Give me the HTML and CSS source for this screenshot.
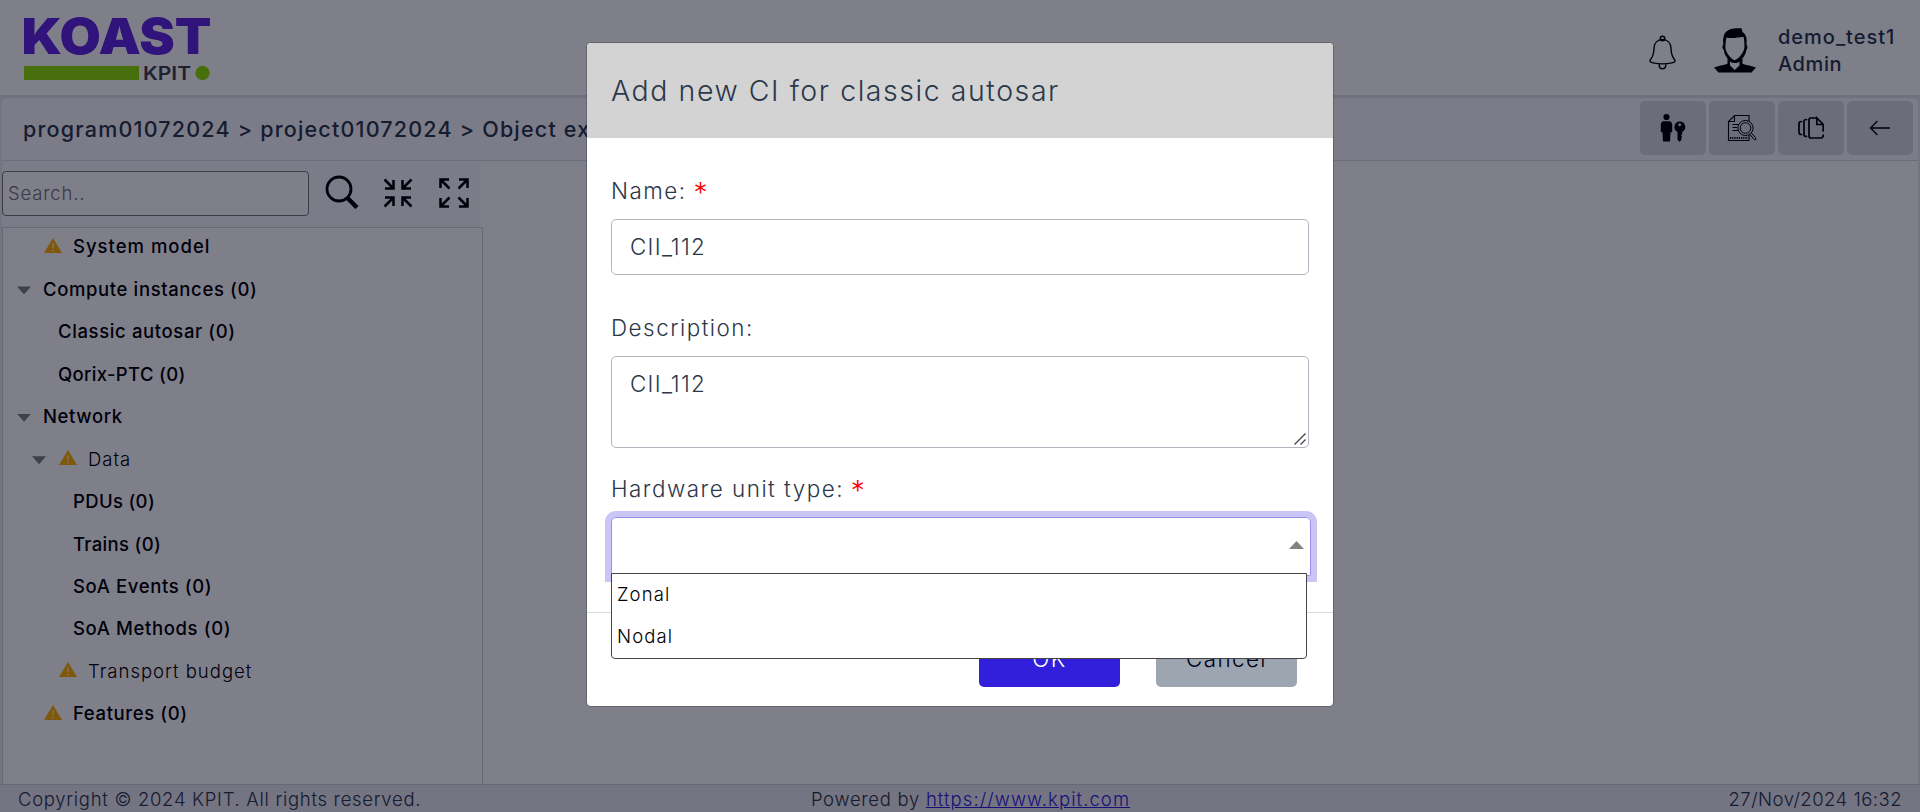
FILE: index.html
```html
<!DOCTYPE html>
<html lang="en">
<head>
<meta charset="utf-8">
<title>KOAST</title>
<link rel="stylesheet" href="styles.css">
</head>
<body>
<div class="app">
  <header class="header">
    <svg class="logo" width="190" height="72" viewBox="0 0 190 72">
      <text class="logo-name" x="-2.500" y="37" textLength="190" lengthAdjust="spacingAndGlyphs">KOAST</text>
      <rect x="0" y="49" width="115" height="14" fill="#8ede03"/>
      <text class="logo-sub" x="119" y="63" textLength="48" lengthAdjust="spacingAndGlyphs">KPIT</text>
      <circle cx="178.500" cy="56" r="7.200" fill="#8ede03"/>
    </svg>
    <div class="account">
      <svg class="bell" width="30" height="36" viewBox="0 0 30 36" fill="none" stroke="#000" stroke-width="1.400">
        <circle cx="14.500" cy="3.500" r="2.300"/>
        <path d="M14.500 4.500c-5 0-8.300 3.600-8.500 9-.2 6-1.200 8.300-3.500 11-1.600 2 .3 3 2.500 3.400 5.500 1.100 13.500 1.100 19 0 2.200-.4 4.100-1.400 2.500-3.400-2.300-2.700-3.300-5-3.500-11-.2-5.400-3.500-9-8.500-9zM11.300 29v1.800c0 4 6.400 4 6.400 0V29"/>
      </svg>
      <svg class="avatar" width="42" height="45" viewBox="0 0 42 45">
        <path d="M0 39.500c4-1.500 10-2.500 13.500-3.800V30.500C11 27.500 10.300 25 10 22.500 8 20 8 18.500 9.300 16.500 8.500 8 10.500 4 14.500 1.900 18 .3 23 .1 27.500.2L28.500 4c4 2.500 4.500 6.500 4 12.500 1.300 2 1.300 3.500-.3 6-.3 2.500-1.200 5-3.700 8v5.200C32 37 38 38 42 39.500L37.500 44.500h-33z" fill="#000"/>
        <path d="M12.500 9.500c5 1.300 12-.2 17-.8 1 3.800 1.200 9.300.7 12-.8 4-5.400 10-9.500 11.600-4.100-1.600-8.400-7.600-9.200-11.600-.5-3 .3-8 1-11.200zM16 33.500c3 2 6.500 2 9.500 0v4L20.700 42 16 37.500z" fill="#fff"/>
      </svg>
      <div class="user"><div class="user-name">demo_test1</div><div class="user-role">Admin</div></div>
    </div>
  </header>
  <div class="page">
    <nav class="crumbs">
      <div class="path">program01072024 &gt; project01072024 &gt; Object explorer</div>
      <div class="tools">
        <button class="tool"><svg width="26" height="30" viewBox="0 0 26 30"><circle cx="6.500" cy="4" r="3.100"/><path d="M4 8.200h5c2.200 0 3.200 1.600 3.200 3.500v7.500h-1.700l-.5 9.300H3l-.5-9.300H.8v-7.500C.8 9.800 1.800 8.200 4 8.200z"/><path fill-rule="evenodd" d="M19.700 8.500a5.500 5.500 0 0 1 2.500 10.400v2.300l-1.200 1.300 1.200 1.500-1.200 1.500.8 1-2.300 2.200-2-2V18.900A5.500 5.500 0 0 1 19.700 8.500zm0 1.800a1.500 1.500 0 1 0 .01 0z"/></svg></button>
        <button class="tool"><svg width="30" height="28" viewBox="0 0 30 28" fill="none" stroke="#000"><path d="M7.500 1.500H22v25H1.500V7.500zM7.500 1.500v6h-6" stroke-width="1.100"/><path d="M5.500 10.500h6M5.500 13.500h5M5.500 16.500h6" stroke-width="1.200"/><path d="M3 24h18" stroke-width="2" stroke-dasharray="1.200 1"/><path d="M23 20.500l4 5c1.500 1 2.800-.2 1.500-1.700L24.500 19" stroke-width="1"/><circle cx="18.500" cy="14" r="7.600" fill="#d8dbe0"/><circle cx="18.500" cy="14" r="5.300"/></svg></button>
        <button class="tool"><svg width="26" height="24" viewBox="0 0 26 24" fill="none" stroke="#000" stroke-width="1.700" stroke-linecap="round"><path d="M3.500 5.500c-2 0-2.500 1-2.500 2v9c0 1 .5 2 2.500 2M8.500 3.500c-2 0-2.500 1-2.500 2v13c0 1 .5 2 2.500 2M18.500 2H13c-1.500 0-2 1-2 2v16c0 1 .8 2 2 2h10c1.500 0 2.300-1 2.300-3M25.200 9v6"/><path d="M18.800 2v6.500h6.400z"/></svg></button>
        <button class="tool"><svg width="22" height="16" viewBox="0 0 22 16" fill="none" stroke="#000" stroke-width="1.300"><path d="M21 8H1.500M8.500 1L1.500 8l7 7"/></svg></button>
      </div>
    </nav>
    <main class="content">
      <aside class="side">
        <div class="search">
          <input class="search-input" placeholder="Search..">
          <svg width="34" height="34" viewBox="0 0 34 34" fill="none" stroke="#000"><circle cx="14" cy="14" r="12" stroke-width="2.800"/><path d="M22.500 23l9.500 9.500" stroke-width="4.500"/></svg>
          <svg class="collapse" width="30" height="30" viewBox="0 0 30 30" fill="none" stroke="#000" stroke-width="2.500"><path d="M1.500 1.500l8.500 8.500M10.500 2v8.500H2M28.500 1.500L20 10M19.500 2v8.500H28M1.500 28.500L10 20M10.500 28v-8.500H2M28.500 28.500L20 20M19.500 28v-8.500H28"/></svg>
          <svg class="expand" width="30" height="30" viewBox="0 0 30 30" fill="none" stroke="#000" stroke-width="2.500"><path d="M2 2l8.500 8.500M1.500 10V1.500H10M28 2l-8.500 8.500M20 1.500h8.500V10M2 28l8.500-8.500M1.500 20v8.500H10M28 28l-8.500-8.500M20 28.500h8.500V20"/></svg>
        </div>
        <div class="tree">
          <div class="node pad-warn1 wide"><svg class="warn" viewBox="0 0 18 15"><path d="M9 0l9 15H0z" fill="#ffb100"/><path d="M9 5v5M9 11.500v2" stroke="#fff" stroke-width="1.600" opacity=".6"/></svg><b>System model</b></div>
          <div class="node pad-arrow1"><i class="arrow"></i><b>Compute instances (0)</b></div>
          <div class="node pad-leaf2"><b>Classic autosar (0)</b></div>
          <div class="node pad-leaf2 tight"><b>Qorix-PTC (0)</b></div>
          <div class="node pad-arrow1"><i class="arrow"></i><b>Network</b></div>
          <div class="node pad-arrow2 light"><i class="arrow"></i><svg class="warn" viewBox="0 0 18 15"><path d="M9 0l9 15H0z" fill="#ffb100"/><path d="M9 5v5M9 11.500v2" stroke="#fff" stroke-width="1.600" opacity=".6"/></svg><span>Data</span></div>
          <div class="node pad-leaf3 tight"><b>PDUs (0)</b></div>
          <div class="node pad-leaf3 tight"><b>Trains (0)</b></div>
          <div class="node pad-leaf3"><b>SoA Events (0)</b></div>
          <div class="node pad-leaf3"><b>SoA Methods (0)</b></div>
          <div class="node pad-warn2 light"><svg class="warn" viewBox="0 0 18 15"><path d="M9 0l9 15H0z" fill="#ffb100"/><path d="M9 5v5M9 11.500v2" stroke="#fff" stroke-width="1.600" opacity=".6"/></svg><span>Transport budget</span></div>
          <div class="node pad-warn1"><svg class="warn" viewBox="0 0 18 15"><path d="M9 0l9 15H0z" fill="#ffb100"/><path d="M9 5v5M9 11.500v2" stroke="#fff" stroke-width="1.600" opacity=".6"/></svg><b>Features (0)</b></div>
        </div>
      </aside>
    </main>
  </div>
  <footer class="footer">
    <span>Copyright © 2024 KPIT. All rights reserved.</span>
    <span class="powered">Powered by <a href="#">https://www.kpit.com</a></span>
    <span class="clock">27/Nov/2024 16:32</span>
  </footer>
</div>
<div class="backdrop">
  <section class="modal">
    <h1 class="modal-head">Add new CI for classic autosar</h1>
    <div class="modal-body">
      <label class="label">Name: <em>*</em></label>
      <div class="field">CII_112</div>
      <label class="label label-desc">Description:</label>
      <div class="field area">CII_112<svg class="grip" width="12" height="12" viewBox="0 0 12 12" stroke="#444" stroke-width="1.300"><path d="M.5 11.500l11-11M6.500 11.500l5-5"/></svg></div>
      <label class="label label-type">Hardware unit type: <em>*</em></label>
      <div class="select"><i class="up"></i>
        <div class="options"><div class="option">Zonal</div><div class="option">Nodal</div></div>
      </div>
    </div>
    <div class="modal-foot">
      <button class="btn ok">OK</button>
      <button class="btn cancel">Cancel</button>
    </div>
  </section>
</div>
</body>
</html>
```
FILE: styles.css
```css
* { box-sizing: border-box; }
body {
  margin: 0;
  height: 812px;
  overflow: hidden;
  font-family: Inter, "Liberation Sans", sans-serif;
  font-size: 18.5px;
  font-weight: 300;
  color: #2c384a;
  background: #fff;
}
button { font: inherit; border: 0; padding: 0; }
svg { flex: none; display: block; }

.app { height: 812px; display: flex; flex-direction: column; }
.header {
  flex: none;
  height: 98px;
  display: flex;
  justify-content: space-between;
  background: #fff;
  border-bottom: 3px solid #e2e1e8;
}
.logo { margin: 17px 0 0 24px; overflow: visible; }
.logo-name { font-size: 50px; font-weight: 900; fill: #6228e0; }
.logo-sub { font-size: 19px; font-weight: 600; fill: #3f434e; }
.account { display: flex; width: 272px; }
.bell { margin-top: 35px; }
.avatar { margin: 28px 0 0 36px; }
.user { margin: 24px 0 0 22px; font-weight: 500; font-size: 20px; line-height: 27px; white-space: nowrap; }
.user-name { letter-spacing: .98px; }
.user-role { letter-spacing: .6px; }

.page { flex: 1; min-height: 0; display: flex; flex-direction: column; padding: 0 2px; background: #e9e8ee; }
.crumbs {
  flex: none;
  height: 63px;
  display: flex;
  justify-content: space-between;
  align-items: flex-start;
  padding: 3px 5px 0 21px;
  background: #f9f8fb;
  border-bottom: 1px solid #d8dbe0;
  border-radius: 5px 5px 0 0;
}
.path { font-size: 21.5px; font-weight: 500; line-height: 57px; letter-spacing: 1.2px; white-space: nowrap; }
.tools { display: flex; gap: 3px; }
.tool { width: 66px; height: 54px; border-radius: 5px; background: #d8dbe0; display: grid; place-items: center; }
.content { flex: 1; min-height: 0; display: flex; background: #fff; }
.side { width: 481px; display: flex; flex-direction: column; }
.search { flex: none; height: 66px; width: 478px; display: flex; align-items: flex-start; padding-top: 10px; background: #f9f8fb; }
.search-input {
  width: 307px;
  height: 45px;
  margin-right: 16px;
  padding: 0 5px 2px;
  border: 1px solid #767676;
  border-radius: 4px;
  font: inherit;
  letter-spacing: .8px;
}
.search-input::placeholder { color: #757575; }
.search svg { margin-top: 4px; }
.search .collapse { margin: 7px 0 0 24px; }
.search .expand { margin: 7px 0 0 26px; }
.tree { flex: 1; min-height: 0; border: 1px solid #d0d0d8; border-bottom: 0; color: #000; }
.node { height: 42.45px; display: flex; align-items: center; padding-bottom: 5.5px; white-space: nowrap; letter-spacing: .62px; }
.node b { font-weight: 500; }
.wide { letter-spacing: 1px; }
.tight { letter-spacing: .33px; }
.light { letter-spacing: 1px; }
.warn { width: 18px; height: 15px; margin: 0 11px 2px 0; }
.arrow { width: 14px; height: 8px; margin: 3px 12px 0 0; background: #808080; clip-path: polygon(0 0, 100% 0, 50% 100%); }
.pad-warn1 { padding-left: 41px; }
.pad-warn2 { padding-left: 56px; }
.pad-arrow1 { padding-left: 14px; }
.pad-arrow2 { padding-left: 29px; }
.pad-arrow2 .arrow { margin-right: 13px; }
.pad-leaf2 { padding-left: 55px; }
.pad-leaf3 { padding-left: 70px; }

.footer {
  flex: none;
  height: 28px;
  display: grid;
  grid-template-columns: 1fr auto 1fr;
  align-items: center;
  padding: 1px 18px 0;
  background: #e9e8ee;
  border-top: 1px solid #d0d0d8;
  letter-spacing: .7px;
  white-space: nowrap;
}
.footer a { color: #321fdb; letter-spacing: 1.07px; }
.powered { padding-left: 21px; }
.clock { text-align: right; letter-spacing: .48px; }

.backdrop {
  position: absolute;
  inset: 0;
  display: flex;
  justify-content: center;
  align-items: flex-start;
  padding-top: 42px;
  background: rgba(0, 0, 21, .5);
}
.modal {
  width: 748px;
  height: 665px;
  display: flex;
  flex-direction: column;
  background: #fff;
  background-clip: padding-box;
  border: 1px solid rgba(0, 0, 21, .2);
  border-radius: 5px;
  font-size: 22.4px;
}
.modal-head {
  flex: none;
  margin: 0;
  height: 95px;
  padding-left: 24px;
  font-size: 28.5px;
  font-weight: 300;
  line-height: 95px;
  letter-spacing: 1.55px;
  background: #d3d3d3;
  border-radius: 4px 4px 0 0;
}
.modal-body { height: 474px; padding: 34px 24px 0; flex: none; }
.label { display: block; height: 47px; line-height: 38px; letter-spacing: 1.5px; }
.label em { color: #f00; font-style: normal; font-size: 28px; line-height: 0; vertical-align: -4px; margin-left: -1px; }
.field { height: 56px; padding: 0 18px; border: 1px solid #b1b7c1; border-radius: 5px; line-height: 54px; letter-spacing: 1.3px; }
.label-desc { margin-top: 34px; }
.area { height: 92px; display: flex; justify-content: space-between; }
.grip { align-self: flex-end; margin: 0 -16px 2px 0; }
.label-type { margin-top: 22px; }
.select {
  position: relative;
  width: 700px;
  height: 59px;
  border: 1px solid #998fed;
  border-radius: 5px 5px 0 0;
  box-shadow: 0 0 0 6px #cbc5f6;
}
.up { position: absolute; right: 6px; top: 23px; width: 15px; height: 8px; background: #848484; clip-path: polygon(50% 0, 100% 100%, 0 100%); }
.options {
  position: absolute;
  left: -1px;
  top: 55px;
  width: 696px;
  height: 86px;
  background: #fff;
  border: 1px solid #444;
  border-radius: 0 0 4px 4px;
  color: #000;
  font-size: 18.5px;
  letter-spacing: 1.1px;
}
.option { height: 42px; line-height: 41px; padding-left: 5px; }
.modal-foot { flex: 1; display: flex; justify-content: flex-end; gap: 36px; padding: 18px 36px 0 0; border-top: 1px solid #d8dbe0; }
.btn { width: 141px; height: 56px; padding-bottom: 2px; border-radius: 5px; letter-spacing: 1.4px; }
.ok { background: #321fdb; color: #fff; }
.cancel { background: #9da5b1; color: #000015; }
```
